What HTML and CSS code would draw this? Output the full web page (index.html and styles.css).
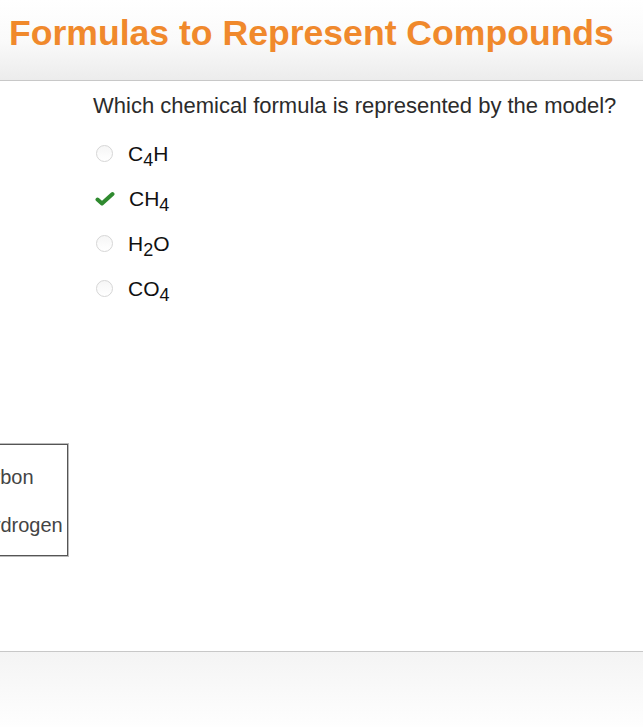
FILE: index.html
```html
<!DOCTYPE html>
<html>
<head>
<meta charset="utf-8">
<link rel="stylesheet" href="styles.css">
</head>
<body>
<div class="page">
  <header class="header">
    <h1 class="title">Formulas to Represent Compounds</h1>
  </header>
  <main class="main">
    <div class="model">
      <div class="legend">
        <div class="legend-item carbon">Carbon</div>
        <div class="legend-item hydrogen">Hydrogen</div>
      </div>
    </div>
    <div class="question">
      <p class="prompt">Which chemical formula is represented by the model?</p>
      <ul class="options">
        <li class="option"><span class="radio"></span><span class="label">C<sub>4</sub>H</span></li>
        <li class="option correct"><span class="check"><svg width="20" height="16" viewBox="0 0 20 16"><path d="M2.5 8.5 L7 12.5 L17.5 3" fill="none" stroke="#2f8a2f" stroke-width="4" stroke-linecap="round" stroke-linejoin="round"/></svg></span><span class="label">CH<sub>4</sub></span></li>
        <li class="option"><span class="radio"></span><span class="label">H<sub>2</sub>O</span></li>
        <li class="option"><span class="radio"></span><span class="label">CO<sub>4</sub></span></li>
      </ul>
    </div>
  </main>
  <footer class="footer"></footer>
</div>
</body>
</html>
```
FILE: styles.css
```css
html, body {
  margin: 0;
  padding: 0;
  background: #fff;
}
body {
  font-family: "Liberation Sans", Arial, sans-serif;
  color: #333;
  overflow: hidden;
}
.page {
  width: 643px;
  height: 727px;
  display: flex;
  flex-direction: column;
}
.header {
  height: 80px;
  border-bottom: 1px solid #c8c8c8;
  background: linear-gradient(#ffffff 0%, #fafafa 50%, #ececec 100%);
  box-sizing: content-box;
}
.title {
  margin: 0;
  padding: 14px 0 0 9px;
  font-size: 35.6px;
  font-weight: bold;
  color: #f0892c;
  line-height: 38px;
  white-space: nowrap;
}
.main {
  height: 570px;
  position: relative;
  display: flex;
}
.model {
  width: 93px;
  flex: none;
  position: relative;
}
.legend {
  position: absolute;
  left: -60px;
  top: 363px;
  width: 126px;
  height: 110px;
  border: 1px solid #555;
  box-shadow: 0 0 0 1px #bbb;
  color: #444;
  font-size: 20px;
  box-sizing: content-box;
}
.legend-item {
  height: 24px;
  line-height: 24px;
}
.carbon { padding-left: 27px; margin-top: 20px; }
.hydrogen { padding-left: 35px; margin-top: 24px; }
.question {
  flex: 1;
  padding-top: 12px;
}
.prompt {
  margin: 0;
  font-size: 22px;
  line-height: 26px;
  color: #2b2b2b;
  white-space: nowrap;
}
.options {
  list-style: none;
  margin: 12px 0 0 0;
  padding: 0;
}
.option {
  display: flex;
  align-items: center;
  height: 45px;
  font-size: 21px;
  color: #111;
}
.radio {
  width: 15px;
  height: 15px;
  border: 1px solid #d6d6d6;
  border-radius: 50%;
  background: linear-gradient(#f6f6f6, #ffffff);
  margin: 0 15px 0 3px;
  flex: none;
}
.check {
  width: 20px;
  height: 16px;
  margin: 0 14px 0 2px;
  display: flex;
}
.label {
  line-height: 24px;
}
.label sub {
  font-size: 18px;
  vertical-align: -5px;
  line-height: 0;
}
.footer {
  flex: 1;
  border-top: 1px solid #c8c8c8;
  background: linear-gradient(#f4f4f4, #fefefe);
}
```
